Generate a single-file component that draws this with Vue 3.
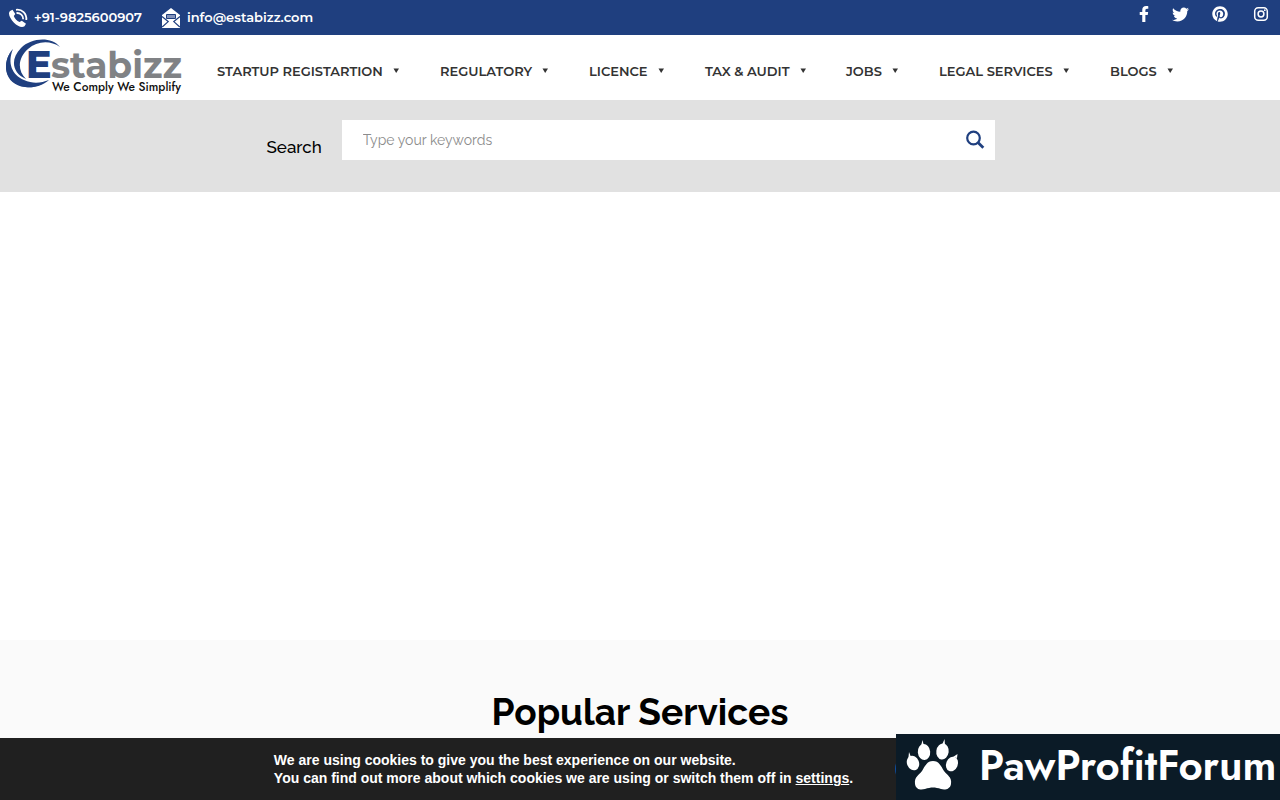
<script setup>
const menu = [
  'STARTUP REGISTARTION',
  'REGULATORY',
  'LICENCE',
  'TAX & AUDIT',
  'JOBS',
  'LEGAL SERVICES',
  'BLOGS',
]
</script>

<template>
  <div class="page">
    <div class="topbar">
      <div class="contacts">
        <a class="contact phone" href="tel:+919825600907">
          <svg width="20" height="20" viewBox="0 0 20 20" fill="none" stroke="#fff" aria-hidden="true">
            <path d="M2 3 4.500 1.800 7.300 6 5.800 8C6.600 10.500 8.800 12.800 11.500 14L13.800 12.700 18 15.800 16.500 18.200C13.800 20 9.500 18.200 6 14.700 2.200 10.900-.6 5.500 2 3Z" fill="#fff" stroke="none" />
            <path d="M8 1.800C14 1 18.900 5.500 18.300 12M8.500 5C12.300 4.700 15.400 7.500 15.200 11.200" stroke-width="1.800" />
          </svg>
          <span>+91-9825600907</span>
        </a>
        <a class="contact" href="mailto:info@estabizz.com">
          <svg width="20" height="20" viewBox="0 0 20 20" aria-hidden="true">
            <path d="M1 7 10 0 19 7V20H1Z" fill="#fff" />
            <path d="M5.500 6.500H14.500V10.500H5.500Z" fill="#8493ba" stroke="#1f3f7f" stroke-width="1" />
            <path d="M1 8.500 7.200 13.600 1.200 19M19 8.500 12.800 13.600 18.800 19" fill="none" stroke="#1f3f7f" stroke-width="1.200" />
          </svg>
          <span>info@estabizz.com</span>
        </a>
      </div>
      <div class="socials">
        <a href="#" aria-label="Facebook">
          <svg width="10" height="16" viewBox="0 0 320 512" fill="#fff"><path d="M279 288l14-93h-89v-60c0-25 12-50 52-50h41V7s-37-7-72-7C152 0 104 44 104 125v70H23v93h81v224h100V288z" /></svg>
        </a>
        <a href="#" aria-label="Twitter">
          <svg width="17" height="17" viewBox="0 0 512 512" fill="#fff"><path d="M459.400 151.700c.3 4.500.3 9.100.3 13.600 0 138.700-105.600 298.600-298.600 298.600-59.500 0-114.700-17.200-161.100-47.100 8.400 1 16.600 1.300 25.300 1.300 49.100 0 94.200-16.600 130.300-44.800-46.100-1-84.800-31.200-98.100-72.800 6.500 1 13 1.600 19.800 1.600 9.400 0 18.800-1.300 27.600-3.600-48.100-9.700-84.100-52-84.100-103v-1.300c14 7.800 30.200 12.700 47.400 13.300-28.300-18.800-46.800-51-46.800-87.400 0-19.500 5.200-37.400 14.300-53 51.700 63.700 129.300 105.300 216.400 109.800-1.600-7.800-2.600-15.900-2.600-24 0-57.800 46.800-104.900 104.900-104.900 30.200 0 57.500 12.700 76.700 33.100 23.700-4.500 46.500-13.300 66.600-25.300-7.800 24.400-24.400 44.800-46.100 57.800 21.100-2.300 41.600-8.100 60.400-16.200-14.300 20.800-32.200 39.300-52.600 54.300z" /></svg>
        </a>
        <a href="#" aria-label="Pinterest">
          <svg width="16" height="16" viewBox="0 0 496 512" fill="#fff"><path d="M496 256c0 137-111 248-248 248-25.600 0-50.200-3.900-73.400-11.100 10.100-16.500 25.200-43.500 30.800-65 3-11.600 15.400-59 15.400-59 8.100 15.400 31.700 28.500 56.800 28.500 74.800 0 128.700-68.800 128.700-154.300 0-81.900-66.900-143.200-152.900-143.200-107 0-163.900 71.800-163.900 150.100 0 36.400 19.400 81.700 50.300 96.100 4.700 2.200 7.200 1.200 8.300-3.300.8-3.400 5-20.300 6.900-28.100.6-2.500.3-4.700-1.700-7.100-10.100-12.500-18.300-35.300-18.300-56.600 0-54.700 41.400-107.600 112-107.600 60.900 0 103.600 41.500 103.600 100.900 0 67.100-33.900 113.600-78 113.600-24.300 0-42.600-20.100-36.700-44.800 7-29.500 20.500-61.300 20.500-82.600 0-19-10.200-34.900-31.400-34.900-24.900 0-44.900 25.700-44.900 60.200 0 22 7.400 36.800 7.400 36.800s-24.500 103.800-29 123.200c-5 21.400-3 51.600-.9 71.200C65.400 450.900 0 361.100 0 256 0 119 111 8 248 8s248 111 248 248z" /></svg>
        </a>
        <a class="last" href="#" aria-label="Instagram">
          <svg width="16" height="16" viewBox="0 0 16 16" fill="none" stroke="#fff"><rect x="1.700" y="1.700" width="12.600" height="12.600" rx="3.500" stroke-width="1.500" /><circle cx="8" cy="8" r="2.900" stroke-width="1.500" /><circle cx="11.800" cy="4.200" r=".9" fill="#fff" stroke="none" /></svg>
        </a>
      </div>
    </div>

    <header class="header">
      <a class="logo" href="#">
        <svg width="190" height="62" viewBox="0 0 190 62">
          <path d="M13 12C3 25 5 44 26 48 36 50 43 47 49 43 40 49 33 51 25 50 4 48 1 25 13 12Z" fill="#1f3f7f" />
          <path d="M13 12C7 26 12 38 24 43 33 47 41 46 49 43 42 49 34 51 26 50 4 47 1 25 13 12Z" fill="#1f3f7f" />
          <path d="M60 10C51-1 31 1 21 11 10 22 12 36 26 42 17 33 18 21 28 12 37 4 50 3 60 10Z" fill="#1f3f7f" />
          <text x="26" y="41" class="logo-e">E</text>
          <text x="51" y="41" class="logo-name">stabizz</text>
          <text x="52" y="54" class="logo-tag">We Comply We Simplify</text>
        </svg>
      </a>
      <nav class="menu">
        <a v-for="item in menu" :key="item" href="#">
          {{ item }}
          <svg width="6" height="5" viewBox="0 0 6 5" aria-hidden="true"><path d="M.5 .5H6L3.200 5Z" fill="#333" /></svg>
        </a>
      </nav>
    </header>

    <form class="search" @submit.prevent>
      <label for="keywords">Search</label>
      <div class="search-box">
        <input id="keywords" type="text" placeholder="Type your keywords" />
        <button type="submit" aria-label="Search">
          <svg width="20" height="20" viewBox="0 0 20 20" fill="none" stroke="#1f3f7f"><circle cx="8.500" cy="8" r="6.300" stroke-width="2.200" /><path d="M13 12.500 18.300 17.800" stroke-width="2.800" /></svg>
        </button>
      </div>
    </form>

    <main class="hero"></main>

    <section class="popular">
      <h2>Popular Services</h2>
    </section>

    <aside class="cookies">
      <p>
        We are using cookies to give you the best experience on our website.<br />
        You can find out more about which cookies we are using or switch them off in
        <button type="button">settings</button>.
      </p>
      <span class="accent"></span>
    </aside>

    <a class="promo" href="#">
      <svg width="56" height="54" viewBox="0 0 56 54" fill="#fff" aria-hidden="true">
        <ellipse cx="8" cy="25" rx="6" ry="7.500" transform="rotate(-22 8 25)" />
        <ellipse cx="19" cy="14" rx="6.200" ry="8" transform="rotate(-5 19 14)" />
        <ellipse cx="37.500" cy="13.500" rx="6.200" ry="8" transform="rotate(8 37.500 13.500)" />
        <ellipse cx="47" cy="26" rx="5.800" ry="7.500" transform="rotate(22 47 26)" />
        <path d="M3.500 19 4 14 6 19ZM16 8 17.500 2 19 8ZM37 7 39.500 1 40 7ZM48 19 52.500 16 52 20Z" />
        <path d="M28 23C34 23 36 28 39 33 42 37 47 39 46 46 45 52 39 52 36 51 30 49 26 49 20 51 16 52 11 52 10 46 9 39 14 37 17 33 20 28 22 23 28 23Z" />
      </svg>
      <span>PawProfitForum</span>
    </a>
  </div>
</template>

<style>
body {
  margin: 0;
  background: #fff;
}
</style>

<style scoped>
.page {
  display: flex;
  flex-direction: column;
  min-height: 100vh;
  font-family: "Montserrat", "Inter", sans-serif;
}
a {
  color: inherit;
  text-decoration: none;
}
svg {
  display: block;
  flex: none;
}
.topbar {
  display: flex;
  justify-content: space-between;
  box-sizing: border-box;
  height: 35px;
  padding: 0 11px 0 8px;
  background: #1f3f7f;
  color: #fff;
  font-size: 13px;
  font-weight: 600;
  line-height: 18px;
}
.contacts,
.contact,
.socials {
  display: flex;
  align-items: center;
}
.contacts {
  gap: 19px;
}
.contact {
  gap: 6px;
}
.contact span {
  padding-bottom: 2px;
}
.socials {
  gap: 23px;
  height: 28px;
}
.socials .last {
  padding-left: 2px;
}
.header {
  display: flex;
  align-items: center;
  height: 65px;
}
.logo {
  flex: none;
  width: 217px;
}
.logo-e,
.logo-name {
  font-family: "Montserrat", "Inter", sans-serif;
  font-size: 36px;
  font-weight: 700;
  fill: #808285;
}
.logo-e {
  font-size: 38px;
  font-weight: 800;
  fill: #1f3f7f;
}
.logo-tag {
  font-family: "Jost", "Lato", sans-serif;
  font-size: 12px;
  font-weight: 500;
  fill: #111;
}
.menu {
  display: grid;
  flex: 1;
  grid-template-columns: 223fr 149fr 116fr 141fr 93fr 171fr 170fr;
  padding-top: 6px;
}
.menu a {
  display: flex;
  align-items: center;
  gap: 10px;
  color: #333;
  font-size: 13px;
  font-weight: 600;
  line-height: 20px;
  white-space: nowrap;
}
.search {
  display: flex;
  justify-content: center;
  gap: 20px;
  box-sizing: border-box;
  height: 92px;
  padding: 20px 19px 0 0;
  background: #e1e1e1;
}
.search label {
  padding-top: 16px;
  font-family: "Raleway", "Inter", sans-serif;
  font-size: 17px;
  font-weight: 500;
  line-height: 22px;
}
.search-box {
  display: flex;
  align-items: center;
  width: 51vw;
  height: 40px;
  background: #fff;
}
.search-box input {
  flex: 1;
  min-width: 0;
  height: 40px;
  box-sizing: border-box;
  padding: 0 21px;
  border: 0;
  outline: 0;
  background: transparent;
  font-family: "Raleway", "Open Sans", sans-serif;
  font-size: 14px;
}
.search-box input::placeholder {
  color: #8c8c8c;
  font-weight: 400;
}
.search-box button {
  padding: 0 10px;
  border: 0;
  background: transparent;
}
.hero {
  height: 56vh;
}
.popular {
  flex: 1;
  background: #fafafa;
}
.popular h2 {
  margin: 49px 0 40px;
  font-family: "Raleway", "Inter", sans-serif;
  font-size: 37px;
  font-weight: 700;
  line-height: 46px;
  text-align: center;
}
.cookies {
  position: fixed;
  right: 0;
  bottom: 0;
  left: 0;
  display: flex;
  justify-content: center;
  align-items: center;
  gap: 42px;
  height: 62px;
  padding-right: 79px;
  background: #202020;
  color: #fff;
  font-family: "Liberation Sans", Arial, sans-serif;
  font-size: 14px;
  font-weight: 700;
  line-height: 18px;
}
.cookies p {
  margin: 0;
}
.cookies button {
  padding: 0;
  border: 0;
  background: none;
  color: inherit;
  font: inherit;
  text-decoration: underline;
}
.accent {
  width: 32px;
  height: 32px;
  border-radius: 16px;
  background: #0c4da2;
}
.promo {
  position: fixed;
  right: 0;
  bottom: 0;
  display: flex;
  align-items: center;
  gap: 18px;
  box-sizing: border-box;
  width: 30%;
  min-width: 384px;
  height: 66px;
  padding: 0 0 4px 9px;
  background: #0b1b27;
  color: #fff;
  font-family: "Jost", "Lato", sans-serif;
  font-size: 42px;
  font-weight: 600;
}
</style>
